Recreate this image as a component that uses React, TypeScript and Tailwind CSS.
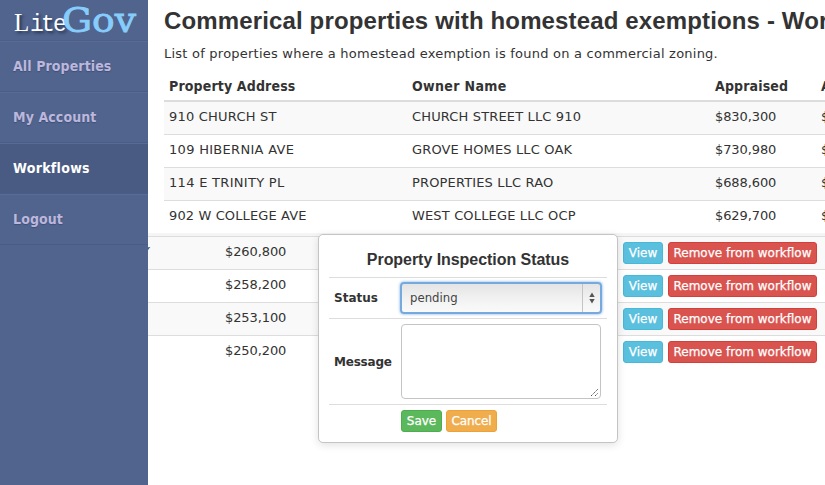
const nav = [
  { label: 'All Properties', active: false },
  { label: 'My Account', active: false },
  { label: 'Workflows', active: true },
  { label: 'Logout', active: false },
];

const properties = [
  { address: '910 CHURCH ST', owner: 'CHURCH STREET LLC 910', value: '$830,300', spacing: 'tracking-[0.22px]' },
  { address: '109 HIBERNIA AVE', owner: 'GROVE HOMES LLC OAK', value: '$730,980', spacing: 'tracking-[0.3px]' },
  { address: '114 E TRINITY PL', owner: 'PROPERTIES LLC RAO', value: '$688,600', spacing: 'tracking-[0.3px]' },
  { address: '902 W COLLEGE AVE', owner: 'WEST COLLEGE LLC OCP', value: '$629,700', spacing: 'tracking-[0.12px]' },
];

const values = ['$260,800', '$258,200', '$253,100', '$250,200'];

function Logo() {
  return (
    <svg width="148" height="40" viewBox="0 0 148 40" className="block" role="img" aria-label="LiteGov">
      <text x="14" y="31" fill="#fff" className="font-['Liberation_Serif',serif] text-[25px] [text-shadow:2px_2px_3px_#26324f]">
        L<tspan x="30 41 53" className="font-['Liberation_Mono',monospace] text-[23px]">ite</tspan>
      </text>
      <text x="62" y="31.5" textLength="74" lengthAdjust="spacingAndGlyphs" fill="#87cdfc" stroke="#87cdfc" strokeWidth="0.8" className="font-['DejaVu_Serif',serif] text-[34px]">Gov</text>
    </svg>
  );
}

function Sidebar() {
  return (
    <aside className="z-10 h-full w-[148px] shrink-0 bg-[#50648e]">
      <div className="h-[41px] border-b border-[#4b5f88]">
        <Logo />
      </div>
      <nav>
        {nav.map((item) => (
          <a
            key={item.label}
            className={`flex h-[51px] items-center border-b border-t border-b-[#4a5d86] border-t-[#586b94] pl-[13px] font-['DejaVu_Sans_Condensed','DejaVu_Sans',sans-serif] text-[14px] font-bold tracking-[0.1px] ${item.active ? 'bg-[#495b82] tracking-[0.3px] text-white' : 'text-[#bdb7dc] [text-shadow:0_1px_1px_#3e5077]'}`}
          >
            {item.label}
          </a>
        ))}
      </nav>
    </aside>
  );
}

function Dialog() {
  return (
    <section className="absolute left-[318px] top-[234px] z-20 h-[209px] w-[300px] rounded-[5px] border border-[#c4c4c4] bg-white px-[10px] shadow-[0_2px_8px_rgba(0,0,0,0.12)]">
      <h2 className="flex h-[42px] items-center justify-center pt-[7px] font-['Liberation_Sans',sans-serif] text-[16px] font-bold tracking-[-0.05px]">
        Property Inspection Status
      </h2>
      <div className="flex h-[41px] items-center border-t border-[#ddd] pl-[5px]">
        <label className="w-[66px] text-[12px] font-bold">Status</label>
        <div className="flex h-[32px] w-[202px] overflow-hidden rounded-[4px] border-2 border-[#76a9dd] bg-gradient-to-b from-[#e4e4e4] via-[#f1f1f1] to-[#fafafa] shadow-[0_0_3px_#76a9dd]">
          <span className="flex flex-1 items-center pl-[8px] font-['DejaVu_Sans_Condensed','DejaVu_Sans',sans-serif] text-[13px] text-[#444]">pending</span>
          <span className="flex w-[18px] items-center justify-center border-l border-[#c4c4c4]">
            <svg width="6" height="12" viewBox="0 0 6 12" fill="#555"><path d="M3 .5 5.7 5H.3zM3 11.5 .3 7h5.4z" /></svg>
          </span>
        </div>
      </div>
      <div className="flex h-[86px] items-center border-t border-[#ddd] pl-[5px]">
        <label className="w-[67px] text-[12px] font-bold tracking-[-0.2px]">Message</label>
        <div className="flex h-[75px] w-[200px] items-end justify-end rounded-[4px] border border-[#c4c4c4] p-px">
          <svg width="9" height="9" viewBox="0 0 9 9" stroke="#555" strokeWidth="1" strokeDasharray="1.5 .7"><path d="M1 8 8 1M5 8 8 5" /></svg>
        </div>
      </div>
      <div className="flex gap-1 border-t border-[#ddd] pl-[72px] pt-[5px] text-[12px] text-white [-webkit-text-stroke:0.25px_white]">
        <button className="h-[22px] w-[41px] rounded-[3px] border border-[#4cae4c] bg-[#5cb85c]">Save</button>
        <button className="h-[22px] w-[51px] rounded-[3px] border border-[#eea236] bg-[#f0ad4e] tracking-[-0.15px]">Cancel</button>
      </div>
    </section>
  );
}

export default function App() {
  return (
    <div className="relative flex h-[485px] w-[825px] overflow-hidden bg-white font-['DejaVu_Sans',sans-serif] text-[13px] text-[#333]">
      <Sidebar />
      <main className="min-w-0 flex-1 overflow-hidden">
        <div className="h-[233px] overflow-hidden pl-4">
          <h1 className="h-[42px] whitespace-nowrap pt-[6px] font-['Liberation_Sans',sans-serif] text-[24px] font-bold leading-[30px] tracking-[0.14px]">
            Commerical properties with homestead exemptions - Workflow
          </h1>
          <p className="h-[30px] whitespace-nowrap pt-[2px] leading-[20px] tracking-[0.23px]">List of properties where a homestead exemption is found on a commercial zoning.</p>
          <div className="flex h-[30px] items-center whitespace-nowrap border-b-2 border-[#ddd] pl-[5px] pt-px font-['DejaVu_Sans_Condensed','DejaVu_Sans',sans-serif] text-[14px] font-bold tracking-[0.15px]">
            <span className="w-[243px] shrink-0">Property Address</span>
            <span className="w-[303px] shrink-0 tracking-[0.35px]">Owner Name</span>
            <span className="w-[106px] shrink-0">Appraised</span>
            <span>Assessed</span>
          </div>
          {properties.map((row, index) => (
            <div key={row.address} className={`flex items-center whitespace-nowrap pb-[3px] pl-[5px] ${index % 2 ? 'bg-white' : 'bg-[#f9f9f9]'} ${index ? 'h-[33px] border-t border-[#ddd]' : 'h-[32px]'}`}>
              <span className={`w-[243px] shrink-0 ${row.spacing}`}>{row.address}</span>
              <span className="w-[303px] shrink-0 tracking-[0.15px]">{row.owner}</span>
              <span className="w-[106px] shrink-0 tracking-[-0.1px]">{row.value}</span>
              <span>{row.value}</span>
            </div>
          ))}
        </div>
        <div className="h-[3px] bg-[#f5f5f5]" />
        {values.map((value, index) => (
          <div key={value} className={`flex h-[33px] items-center border-t border-[#ddd] ${index % 2 ? 'bg-white' : 'bg-[#f9f9f9]'}`}>
            <div className="flex w-[77px] shrink-0 pb-[2px]">{index === 0 && <span className="-ml-[6px] text-[#24466c]">Y</span>}</div>
            <span className="w-[398px] shrink-0 pb-[2px] tracking-[-0.1px]">{value}</span>
            <div className="flex gap-[5px] text-[12px] text-white [-webkit-text-stroke:0.25px_white]">
              <button className="h-[22px] w-[40px] rounded-[3px] border border-[#46b8da] bg-[#5bc0de]">View</button>
              <button className="h-[22px] w-[149px] whitespace-nowrap rounded-[3px] border border-[#d43f3a] bg-[#d9534f]">Remove from workflow</button>
            </div>
          </div>
        ))}
      </main>
      <Dialog />
    </div>
  );
}
